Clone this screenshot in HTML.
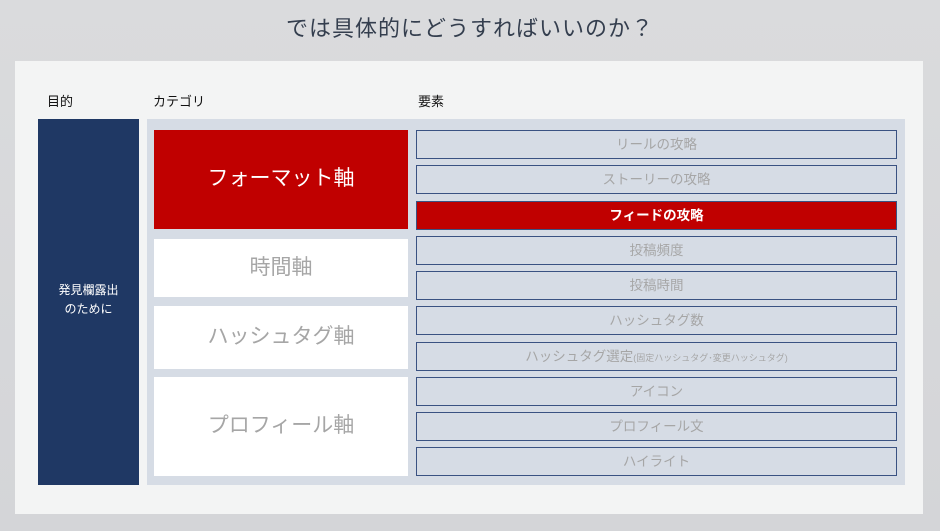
<!DOCTYPE html>
<html><head><meta charset="utf-8"><style>
*{margin:0;padding:0;box-sizing:border-box}
body{width:940px;height:531px;overflow:hidden;background:linear-gradient(#dadbdd,#d4d5d8);font-family:"Liberation Sans","Noto Sans CJK JP",sans-serif;position:relative}
.a{position:absolute}
.title{left:0;width:940px;top:11px;text-align:center;font-size:22px;color:#343e4e;letter-spacing:1px}
.panel{left:15px;top:61px;width:908px;height:453px;background:#f3f4f4}
.h{top:91px;font-size:13px;color:#111}
.navy{left:38px;top:119px;width:101px;height:366px;background:#1f3864;color:#fff;font-size:12px;display:flex;align-items:center;justify-content:center;text-align:center;line-height:19px;padding-bottom:4px}
.lb{left:147px;top:119px;width:758px;height:366px;background:#d6dce5}
.c{left:154px;width:254px;background:#fff;color:#a6a6a6;font-size:21px;display:flex;align-items:center;justify-content:center;padding-bottom:5px}
.e{left:416px;width:481px;height:29px;border:1px solid #3a5282;background:#d6dce5;color:#a6a6a6;font-size:13.5px;display:flex;align-items:center;justify-content:center;padding-bottom:4px}
</style></head><body>
<div class="a title">では具体的にどうすればいいのか？</div>
<div class="a panel"></div>
<div class="a h" style="left:47px">目的</div>
<div class="a h" style="left:153px">カテゴリ</div>
<div class="a h" style="left:418px">要素</div>
<div class="a navy">発見欄露出<br>のために</div>
<div class="a lb"></div>
<div class="a c" style="top:130px;height:99px;background:#c00000;color:#fff">フォーマット軸</div>
<div class="a c" style="top:239px;height:58px">時間軸</div>
<div class="a c" style="top:306px;height:63px">ハッシュタグ軸</div>
<div class="a c" style="top:377px;height:99px">プロフィール軸</div>
<div class="a e" style="top:130px">リールの攻略</div>
<div class="a e" style="top:165px">ストーリーの攻略</div>
<div class="a e" style="top:201px;background:#c00000;color:#fff;font-weight:bold">フィードの攻略</div>
<div class="a e" style="top:236px">投稿頻度</div>
<div class="a e" style="top:271px">投稿時間</div>
<div class="a e" style="top:306px">ハッシュタグ数</div>
<div class="a e" style="top:342px"><span>ハッシュタグ選定<span style="font-size:9px">(固定ハッシュタグ･変更ハッシュタグ)</span></span></div>
<div class="a e" style="top:377px">アイコン</div>
<div class="a e" style="top:412px">プロフィール文</div>
<div class="a e" style="top:447px">ハイライト</div>
</body></html>
